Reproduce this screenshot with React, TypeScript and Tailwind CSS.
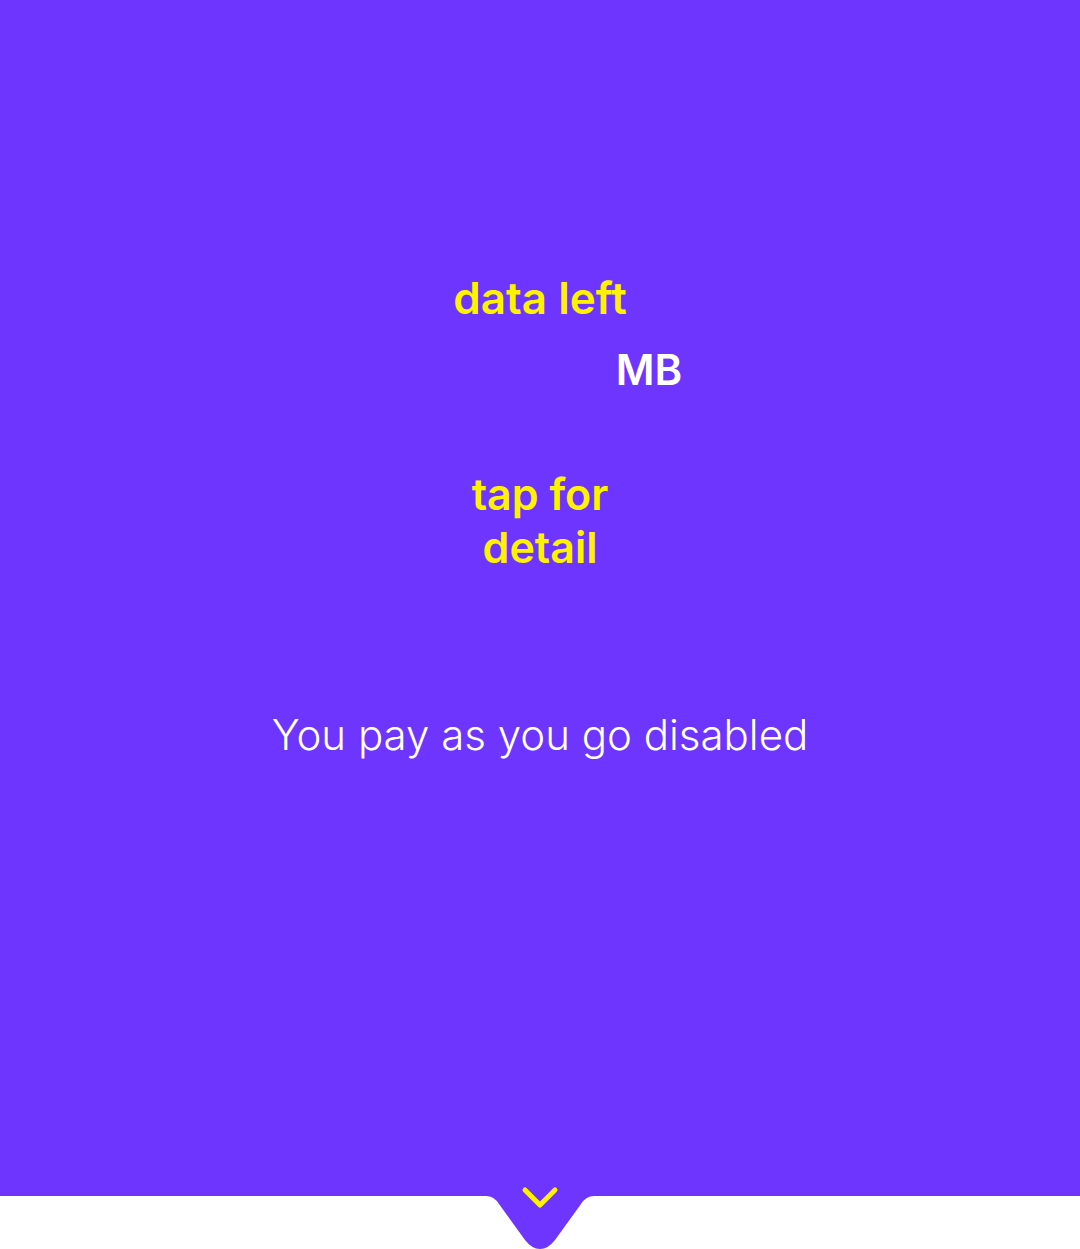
export default function App() {
  return (
    <div className="min-h-[1249px] w-full bg-white" style={{ fontFamily: "Inter, 'Noto Sans', sans-serif" }}>
      <section className="flex h-[1196px] flex-col items-center bg-[#6e35ff] pt-[270px]">
        <h2 className="text-[44px] font-semibold leading-[56px] text-[#fff200]">data left</h2>
        <div className="mt-[18px] flex items-baseline">
          <span className="w-[218px]" />
          <span className="text-[42px] font-semibold leading-[52px] text-white">MB</span>
        </div>
        <button
          type="button"
          className="mt-[72px] w-[200px] text-center text-[43px] font-semibold leading-[53px] text-[#fff200]"
        >
          tap for detail
        </button>
        <p className="mt-[133px] text-[42px] font-light leading-[56px] text-white">
          You pay as you go disabled
        </p>
      </section>
      <div className="-mt-[16px] flex justify-center">
        <svg width="120" height="69" viewBox="0 0 120 69">
          <path
            d="M0 0 H120 V16 H114 Q106 16 101 24 L75 60 Q68 69 60 69 Q52 69 45 60 L19 24 Q14 16 6 16 H0 Z"
            fill="#6e35ff"
          />
          <path
            d="M45 10 L60 25 L75 10"
            fill="none"
            stroke="#fff200"
            strokeWidth="5"
            strokeLinecap="round"
            strokeLinejoin="round"
          />
        </svg>
      </div>
    </div>
  );
}
